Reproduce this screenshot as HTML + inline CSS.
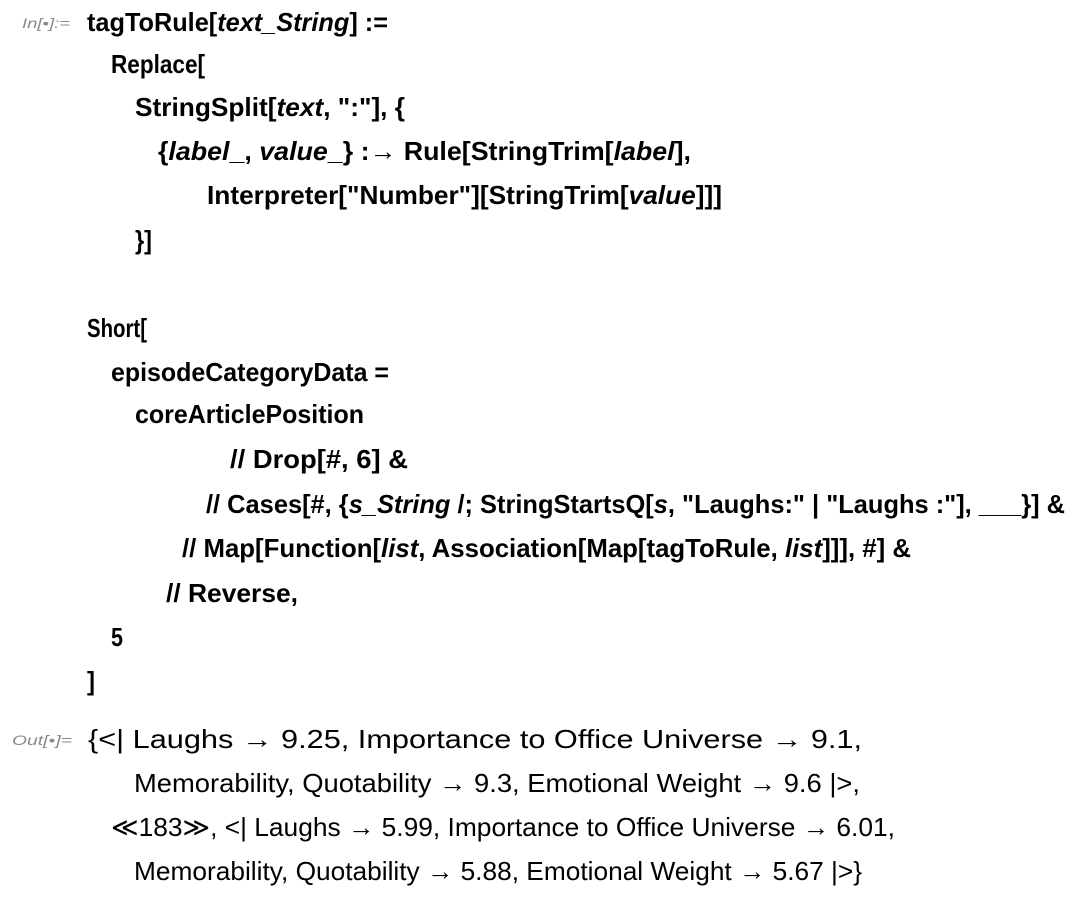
<!DOCTYPE html>
<html><head><meta charset="utf-8"><style>
html,body{margin:0;padding:0;background:#fff;width:1080px;height:898px;overflow:hidden}
svg{display:block}
.b{font-family:"Liberation Sans","DejaVu Sans",sans-serif;font-weight:bold;font-size:26px;fill:#000}
.o{font-family:"Liberation Sans","DejaVu Sans",sans-serif;font-size:26px;fill:#000}
.l{font-family:"Liberation Sans",sans-serif;font-style:italic;font-size:14px;fill:#8a8a8a}
.i{font-style:italic}
</style></head><body>
<svg width="1080" height="898" xmlns="http://www.w3.org/2000/svg">
<text class="l" x="22" y="28" textLength="48" lengthAdjust="spacingAndGlyphs">In[•]:=</text>
<text class="b" x="87" y="31" textLength="301" lengthAdjust="spacingAndGlyphs">tagToRule[<tspan class="i">text_String</tspan>] :=</text>
<text class="b" x="111" y="73" textLength="94" lengthAdjust="spacingAndGlyphs">Replace[</text>
<text class="b" x="135" y="116" textLength="270" lengthAdjust="spacingAndGlyphs">StringSplit[<tspan class="i">text</tspan>, ":"], {</text>
<text class="b" x="158" y="160" textLength="533" lengthAdjust="spacingAndGlyphs">{<tspan class="i">label</tspan>_, <tspan class="i">value</tspan>_} :→ Rule[StringTrim[<tspan class="i">label</tspan>],</text>
<text class="b" x="207" y="204" textLength="515" lengthAdjust="spacingAndGlyphs">Interpreter["Number"][StringTrim[<tspan class="i">value</tspan>]]]</text>
<text class="b" x="135" y="249" textLength="17" lengthAdjust="spacingAndGlyphs">}]</text>
<text class="b" x="87" y="337" textLength="60" lengthAdjust="spacingAndGlyphs">Short[</text>
<text class="b" x="111" y="381" textLength="278" lengthAdjust="spacingAndGlyphs">episodeCategoryData =</text>
<text class="b" x="135" y="423" textLength="229" lengthAdjust="spacingAndGlyphs">coreArticlePosition</text>
<text class="b" x="230" y="468" textLength="178" lengthAdjust="spacingAndGlyphs">// Drop[#, 6] &amp;</text>
<text class="b" x="206" y="513" textLength="859" lengthAdjust="spacingAndGlyphs">// Cases[#, {<tspan class="i">s_String</tspan> /; StringStartsQ[<tspan class="i">s</tspan>, "Laughs:" | "Laughs :"], ___}] &amp;</text>
<text class="b" x="182" y="557" textLength="729" lengthAdjust="spacingAndGlyphs">// Map[Function[<tspan class="i">list</tspan>, Association[Map[tagToRule, <tspan class="i">list</tspan>]]], #] &amp;</text>
<text class="b" x="166" y="602" textLength="132" lengthAdjust="spacingAndGlyphs">//  Reverse,</text>
<text class="b" x="111" y="646" textLength="12" lengthAdjust="spacingAndGlyphs">5</text>
<text class="b" x="87" y="690" textLength="8" lengthAdjust="spacingAndGlyphs">]</text>
<text class="l" x="12" y="745" textLength="60" lengthAdjust="spacingAndGlyphs">Out[•]=</text>
<text class="o" x="88" y="748" textLength="774" lengthAdjust="spacingAndGlyphs">{&lt;| Laughs → 9.25, Importance to Office Universe → 9.1,</text>
<text class="o" x="134" y="792" textLength="726" lengthAdjust="spacingAndGlyphs">Memorability, Quotability → 9.3, Emotional Weight → 9.6 |&gt;,</text>
<text class="o" x="111" y="836" textLength="784" lengthAdjust="spacingAndGlyphs">≪183≫, &lt;| Laughs → 5.99, Importance to Office Universe → 6.01,</text>
<text class="o" x="134" y="880" textLength="728" lengthAdjust="spacingAndGlyphs">Memorability, Quotability → 5.88, Emotional Weight → 5.67 |&gt;}</text>
</svg>
</body></html>
